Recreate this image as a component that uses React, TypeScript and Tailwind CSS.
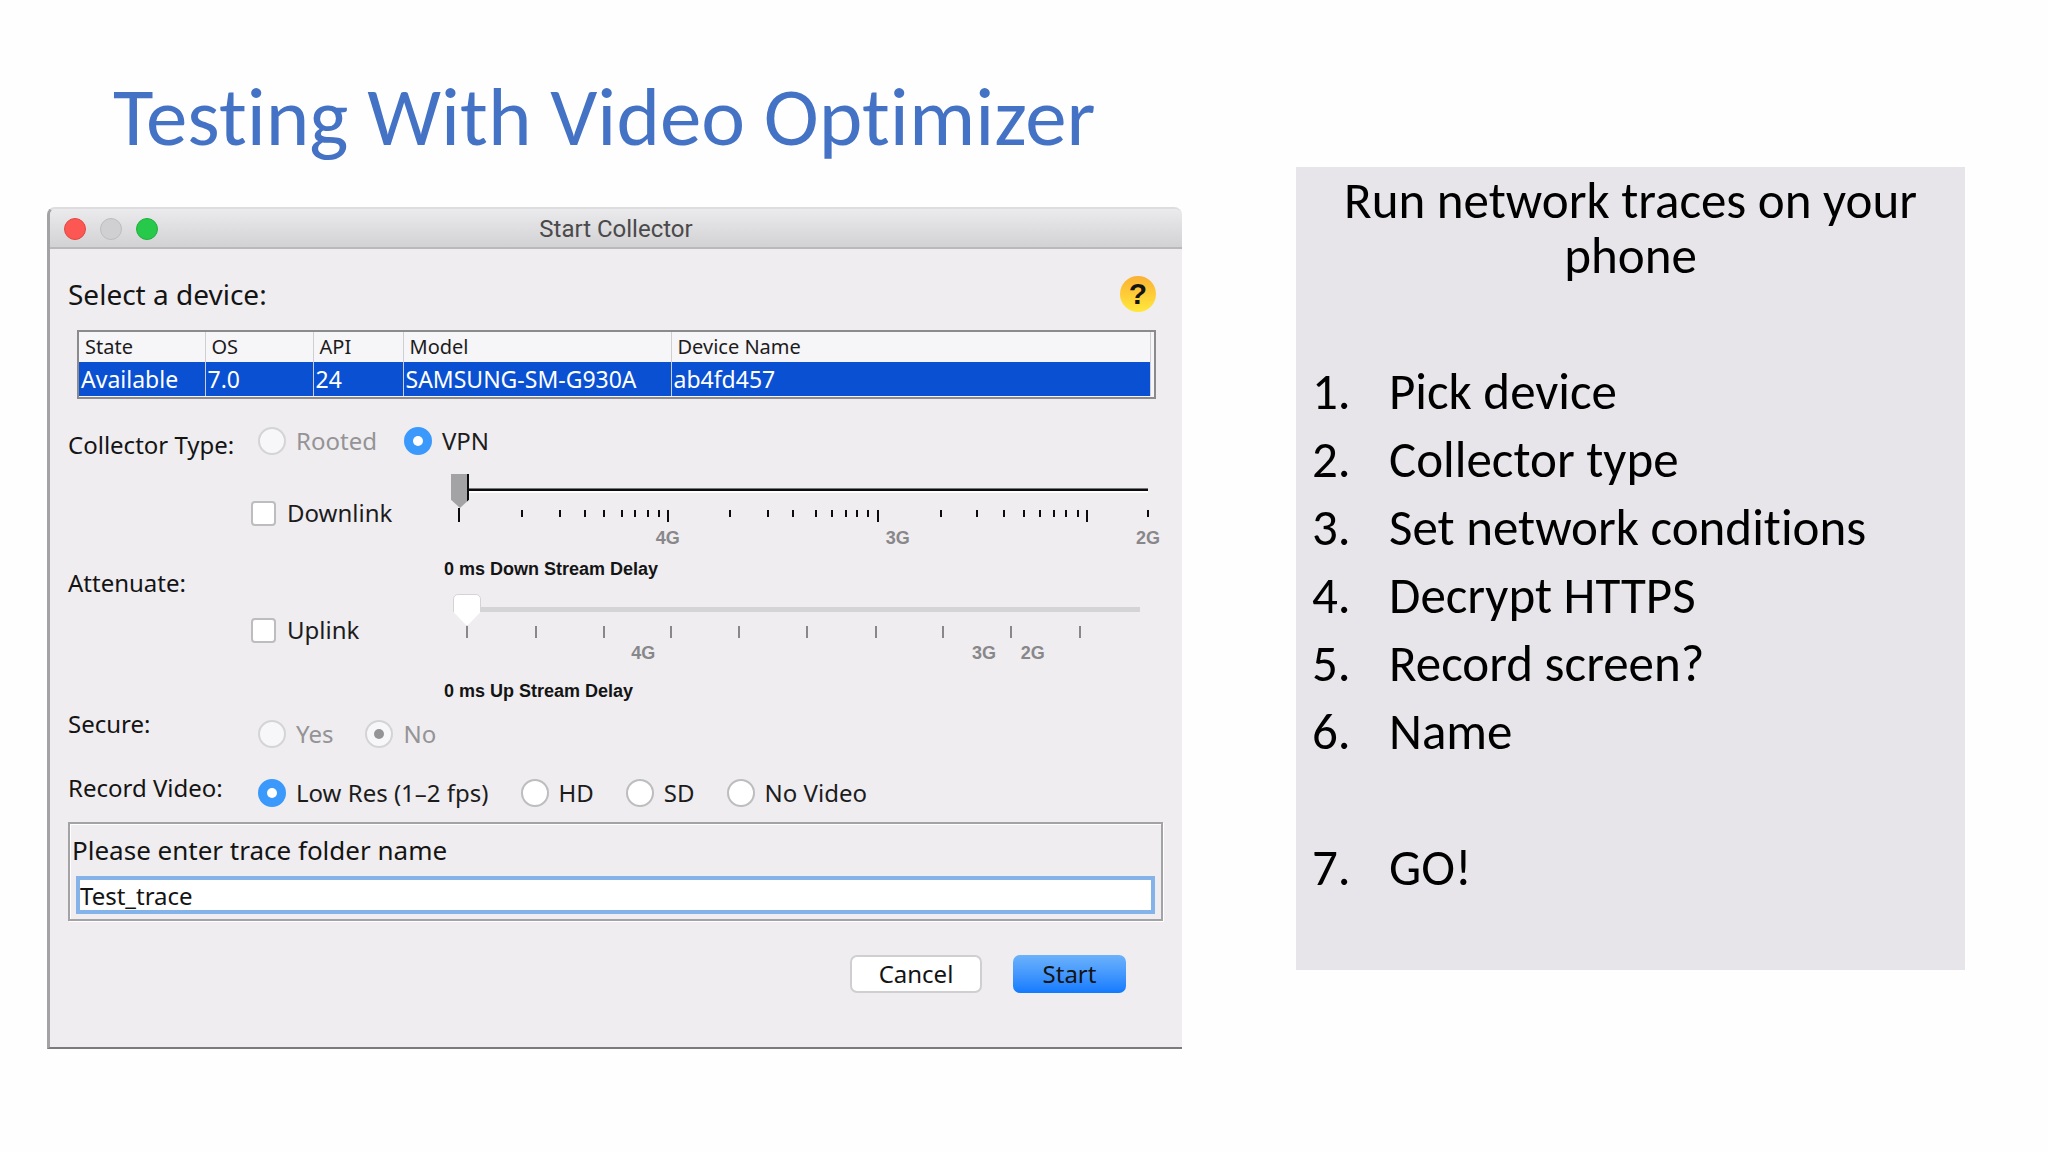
import { useState } from "react";
import type { ReactNode } from "react";
import clsx from "clsx";

type Tick = { at: number; major?: boolean };
type Mark = { at: number; label: string };

// positions are percentages of the slider's width
const downTicks: Tick[] = [
  { at: 1.2, major: true },
  { at: 10.2 },
  { at: 15.6 },
  { at: 19.2 },
  { at: 22 },
  { at: 24.5 },
  { at: 26.4 },
  { at: 28.2 },
  { at: 29.8 },
  { at: 31.1, major: true },
  { at: 40.1 },
  { at: 45.5 },
  { at: 49.1 },
  { at: 52.3 },
  { at: 54.6 },
  { at: 56.6 },
  { at: 58.2 },
  { at: 59.8 },
  { at: 61.3, major: true },
  { at: 70.3 },
  { at: 75.5 },
  { at: 79.3 },
  { at: 82.2 },
  { at: 84.5 },
  { at: 86.5 },
  { at: 88.3 },
  { at: 89.9 },
  { at: 91.2, major: true },
  { at: 100 }
];

const upTicks = [2.1, 12.1, 22, 31.8, 41.7, 51.6, 61.5, 71.3, 81.2, 91.2];

const downMarks: Mark[] = [
  { at: 31.1, label: "4G" },
  { at: 64.1, label: "3G" },
  { at: 100, label: "2G" }
];

const upMarks: Mark[] = [
  { at: 27.7, label: "4G" },
  { at: 77.3, label: "3G" },
  { at: 84.4, label: "2G" }
];

const columns = [
  { label: "State", value: "Available", width: "w-[126px]" },
  { label: "OS", value: "7.0", width: "w-[108px]" },
  { label: "API", value: "24", width: "w-[90px]" },
  { label: "Model", value: "SAMSUNG-SM-G930A", width: "w-[268px]" },
  { label: "Device Name", value: "ab4fd457", width: "" }
];

const steps = [
  "Pick device",
  "Collector type",
  "Set network conditions",
  "Decrypt HTTPS",
  "Record screen?",
  "Name",
  "GO!"
];

function Radio({
  name,
  label,
  defaultChecked,
  disabled
}: {
  name: string;
  label: string;
  defaultChecked?: boolean;
  disabled?: boolean;
}) {
  return (
    <label className={clsx("flex h-9 items-center gap-[10px]", disabled ? "text-[#949395]" : "text-[#1c1c1d]")}>
      <input
        type="radio"
        name={name}
        defaultChecked={defaultChecked}
        disabled={disabled}
        className="grid size-7 shrink-0 appearance-none place-items-center rounded-full border-2 border-[#bdbcbe] bg-white before:size-[10px] before:rounded-full checked:border-[#3b99fc] checked:bg-[#3b99fc] checked:before:bg-white disabled:border-[#d4d3d5] disabled:bg-[#f7f6f8] disabled:checked:before:bg-[#949395]"
      />
      {label}
    </label>
  );
}

function Checkbox({ label }: { label: string }) {
  return (
    <label className="flex h-9 items-center gap-[11px] text-[#1c1c1d]">
      <input
        type="checkbox"
        className="size-[25px] shrink-0 appearance-none rounded-[4px] border-2 border-[#bdbcbe] bg-white checked:bg-[#3b99fc]"
      />
      {label}
    </label>
  );
}

function Marks({ marks }: { marks: Mark[] }) {
  return (
    <div className="relative h-6 font-['Liberation_Sans',sans-serif] text-[18px] leading-6 font-bold text-[#88878a]">
      {marks.map((mark) => (
        <span key={mark.label} className="absolute -translate-x-1/2" style={{ left: `${mark.at}%` }}>
          {mark.label}
        </span>
      ))}
    </div>
  );
}

function DelayText({ children }: { children: ReactNode }) {
  return (
    <p className="pl-[5px] font-['Liberation_Sans',sans-serif] text-[18px] leading-6 font-bold text-[#141414]">
      {children}
    </p>
  );
}

function TitleBar() {
  return (
    <div className="grid h-10 grid-cols-3 items-center border-b-2 border-[#b9b8ba] bg-linear-to-b from-[#ebeaec] to-[#d2d1d3] px-[14px] pt-[2px]">
      <div className="flex gap-[14px]">
        <button aria-label="Close" className="size-[22px] rounded-full border border-[#e2463f] bg-[#fc5753]" />
        <button aria-label="Minimize" className="size-[22px] rounded-full border border-[#bdbcbe] bg-[#d0cfd1]" />
        <button aria-label="Zoom" className="size-[22px] rounded-full border border-[#1faf3c] bg-[#26c94a]" />
      </div>
      <h2 className="text-center font-[Roboto,sans-serif] text-[24px] leading-8 text-[#4a494b]">Start Collector</h2>
    </div>
  );
}

function DeviceTable() {
  return (
    <div className="mr-[26px] ml-[27px] border-2 border-[#8b8a8c] bg-[#f6f5f7] pr-[3px] pb-px">
      <table className="w-full table-fixed border-collapse text-left">
        <thead>
          <tr className="h-[30px] text-[20px] leading-6 text-[#1c1c1d]">
            {columns.map((col) => (
              <th key={col.label} className={clsx("border-r border-[#cfced0] pl-[6px] font-normal", col.width)}>
                {col.label}
              </th>
            ))}
          </tr>
        </thead>
        <tbody>
          <tr className="h-[34px] bg-[#0a50d2] text-[23px] leading-7 text-white">
            {columns.map((col) => (
              <td key={col.label} className="border-r border-[#cfced0] pl-[2px] whitespace-nowrap">
                {col.value}
              </td>
            ))}
          </tr>
        </tbody>
      </table>
    </div>
  );
}

function DownlinkSlider() {
  const [value, setValue] = useState(0);

  return (
    <div className="h-[120px]">
      <div className="mr-[34px] ml-3">
        <input
          type="range"
          aria-label="Down stream delay"
          value={value}
          onChange={(e) => setValue(Number(e.target.value))}
          className="block h-[34px] w-full appearance-none bg-[linear-gradient(to_bottom,transparent_14px,#77767a_14px,#77767a_15px,#0c0c0c_15px,#0c0c0c_17px,#fff_17px,#fff_19px,transparent_19px)] [&::-webkit-slider-thumb]:h-[34px] [&::-webkit-slider-thumb]:w-[18px] [&::-webkit-slider-thumb]:appearance-none [&::-webkit-slider-thumb]:bg-[linear-gradient(to_right,#a3a2a4_16px,#0c0c0c_16px)] [&::-webkit-slider-thumb]:[clip-path:polygon(0_0,100%_0,100%_76%,50%_100%,0_76%)]"
        />
        <div className="relative h-[14px]">
          {downTicks.map((tick, i) => (
            <span
              key={tick.at}
              className={clsx(
                "absolute w-[2px] -translate-x-1/2 bg-[#0c0c0c]",
                i === 0 ? "top-0 h-[14px]" : tick.major ? "top-[2px] h-3" : "top-[2px] h-[7px]"
              )}
              style={{ left: `${tick.at}%` }}
            />
          ))}
        </div>
        <div className="pt-1">
          <Marks marks={downMarks} />
        </div>
      </div>
      <div className="pt-[7px]">
        <DelayText>{value} ms Down Stream Delay</DelayText>
      </div>
    </div>
  );
}

function UplinkSlider() {
  const [value, setValue] = useState(0);

  return (
    <div className="h-[112px]">
      <div className="mr-[42px] ml-[14px]">
        <input
          type="range"
          aria-label="Up stream delay"
          value={value}
          onChange={(e) => setValue(Number(e.target.value))}
          className="block h-8 w-full appearance-none bg-[linear-gradient(to_bottom,transparent_13px,#d4d3d5_13px,#d4d3d5_18px,transparent_18px)] [&::-webkit-slider-thumb]:h-8 [&::-webkit-slider-thumb]:w-7 [&::-webkit-slider-thumb]:appearance-none [&::-webkit-slider-thumb]:rounded-t-[5px] [&::-webkit-slider-thumb]:border [&::-webkit-slider-thumb]:border-[#d4d3d5] [&::-webkit-slider-thumb]:bg-white [&::-webkit-slider-thumb]:[clip-path:polygon(0_0,100%_0,100%_55%,50%_100%,0_55%)]"
        />
        <div className="relative h-3">
          {upTicks.map((at) => (
            <span
              key={at}
              className="absolute top-0 h-3 w-[2px] -translate-x-1/2 bg-[#88878a]"
              style={{ left: `${at}%` }}
            />
          ))}
        </div>
        <div className="pt-[3px]">
          <Marks marks={upMarks} />
        </div>
      </div>
      <div className="pt-[14px]">
        <DelayText>{value} ms Up Stream Delay</DelayText>
      </div>
    </div>
  );
}

function StartCollectorDialog() {
  return (
    <section className="overflow-hidden rounded-t-lg border-t-2 border-b-2 border-l-[3px] border-t-[#dddcde] border-b-[#7b7a7c] border-l-[#a3a2a4] bg-[#efedf0] font-['Noto_Sans',sans-serif] text-[24px] leading-9 text-[#141414]">
      <TitleBar />

      <div className="flex items-center justify-between pt-[27px] pr-[26px] pb-[18px] pl-[18px]">
        <h3 className="text-[28px]">Select a device:</h3>
        <button
          aria-label="Help"
          className="size-9 rounded-full bg-linear-to-b from-[#fbb034] to-[#ffe83b] font-['Liberation_Sans',sans-serif] text-[30px] font-bold"
        >
          ?
        </button>
      </div>

      <DeviceTable />

      <form onSubmit={(e) => e.preventDefault()}>
        <div className="grid grid-cols-[183px_188px_minmax(0,1fr)] pl-[18px]">
          <div className="pt-7">Collector Type:</div>
          <div className="col-span-2 flex gap-[27px] pt-6 pb-[15px] pl-[7px]">
            <Radio name="collector" label="Rooted" disabled />
            <Radio name="collector" label="VPN" defaultChecked />
          </div>

          <div className="row-span-2 self-center pb-[14px]">Attenuate:</div>
          <div className="pt-[21px]">
            <Checkbox label="Downlink" />
          </div>
          <DownlinkSlider />
          <div className="pt-[18px]">
            <Checkbox label="Uplink" />
          </div>
          <UplinkSlider />

          <div>Secure:</div>
          <div className="col-span-2 flex gap-8 pt-[10px] pl-[7px]">
            <Radio name="secure" label="Yes" disabled />
            <Radio name="secure" label="No" defaultChecked disabled />
          </div>

          <div className="pt-[18px]">Record Video:</div>
          <div className="col-span-2 flex gap-8 pt-[23px] pb-[11px] pl-[7px]">
            <Radio name="video" label="Low Res (1–2 fps)" defaultChecked />
            <Radio name="video" label="HD" />
            <Radio name="video" label="SD" />
            <Radio name="video" label="No Video" />
          </div>
        </div>

        <div className="mr-[19px] ml-[18px] border-2 border-[#a3a2a4] px-[6px] pt-2 pb-[5px] shadow-[inset_1px_1px_0_#fff,1px_1px_0_#fff]">
          <label htmlFor="trace-folder" className="-ml-1 block text-[26px]">
            Please enter trace folder name
          </label>
          <input
            id="trace-folder"
            type="text"
            defaultValue="Test_trace"
            className="mt-2 block h-[38px] w-full border-4 border-[#84b3ea] bg-white text-[24px] leading-7 outline-none"
          />
        </div>

        <div className="flex justify-end gap-[31px] pt-[34px] pr-[56px] pb-[54px]">
          <button
            type="button"
            className="h-[38px] w-[132px] rounded-[7px] border-2 border-[#cfced0] bg-white leading-8"
          >
            Cancel
          </button>
          <button
            type="submit"
            className="h-[38px] w-[113px] rounded-[7px] bg-linear-to-b from-[#6bb2fb] to-[#0f7afe] leading-8"
          >
            Start
          </button>
        </div>
      </form>
    </section>
  );
}

export default function App() {
  return (
    <main className="min-h-screen bg-[#fefefe] pt-[67px] pr-[83px] pb-8 pl-[47px] font-[Carlito,Lato,sans-serif] [font-variant-ligatures:none]">
      <div className="grid grid-cols-[1135fr_669fr] items-start gap-[114px]">
        <div className="min-w-0">
          <h1 className="pb-[40px] pl-[66px] text-[83px] leading-[100px] whitespace-nowrap text-[#4472c4]">
            Testing With Video Optimizer
          </h1>
          <StartCollectorDialog />
        </div>

        <aside className="mt-[100px] min-w-0 bg-[#e7e5e9] px-4 pt-[6px] pb-[68px] text-[51px] text-black">
          <p className="text-center leading-[55px]">Run network traces on your phone</p>
          <ol className="mt-[75px] leading-[68px]">
            {steps.map((step, i) => (
              <li key={step} className={clsx("flex", i === 6 && "mt-[68px]")}>
                <span className="w-[77px] shrink-0">{i + 1}.</span>
                {step}
              </li>
            ))}
          </ol>
        </aside>
      </div>
    </main>
  );
}
